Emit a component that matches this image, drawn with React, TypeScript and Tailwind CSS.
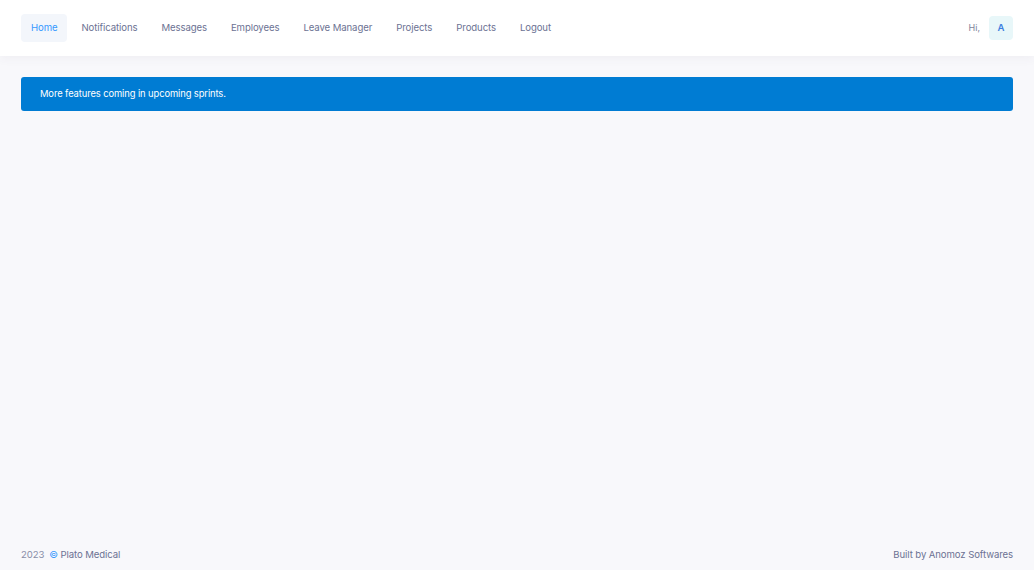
import { useState } from 'react';

const NAV_ITEMS = ['Home', 'Notifications', 'Messages', 'Employees', 'Leave Manager', 'Projects', 'Products', 'Logout'];

export default function App() {
  const [active, setActive] = useState('Home');

  return (
    <div
      className="min-h-screen flex flex-col bg-[#f8f8fb] text-[9.6px]"
      style={{ fontFamily: 'Inter, "Noto Sans", sans-serif' }}
    >
      <header className="h-[56px] bg-white shadow-[0_2px_10px_rgba(82,63,105,0.06)] flex items-center justify-between px-[21px]">
        <nav className="flex items-center gap-[4px]">
          {NAV_ITEMS.map((item) => (
            <button
              key={item}
              onClick={() => setActive(item)}
              className={`h-[28px] px-[10px] rounded-[4px] leading-none tracking-[-0.1px] ${
                active === item ? 'bg-[#f3f6fb] text-[#3699ff]' : 'text-[#6c7293]'
              }`}
            >
              {item}
            </button>
          ))}
        </nav>
        <div className="flex items-center gap-[9px]">
          <span className="text-[#7e8299] text-[9px]">Hi,</span>
          <div className="w-[24px] h-[24px] rounded-[4px] bg-[#e8f7f9] text-[#3f7fe0] font-semibold flex items-center justify-center">
            A
          </div>
        </div>
      </header>

      <main className="flex-1 px-[21px] pt-[21px]">
        <div className="h-[34px] rounded-[3px] bg-[#007cd3] text-white flex items-center px-[19px] text-[9.4px] tracking-[-0.1px]">
          More features coming in upcoming sprints.
        </div>
      </main>

      <footer className="h-[30px] px-[21px] flex items-center justify-between tracking-[-0.1px]">
        <div className="flex items-center gap-[5px] text-[#8a8fa8]">
          <span>2023</span>
          <span className="text-[#6c7293]">
            <span className="text-[#3699ff]">©</span> Plato Medical
          </span>
        </div>
        <div className="text-[#6c7293]">Built by Anomoz Softwares</div>
      </footer>
    </div>
  );
}
